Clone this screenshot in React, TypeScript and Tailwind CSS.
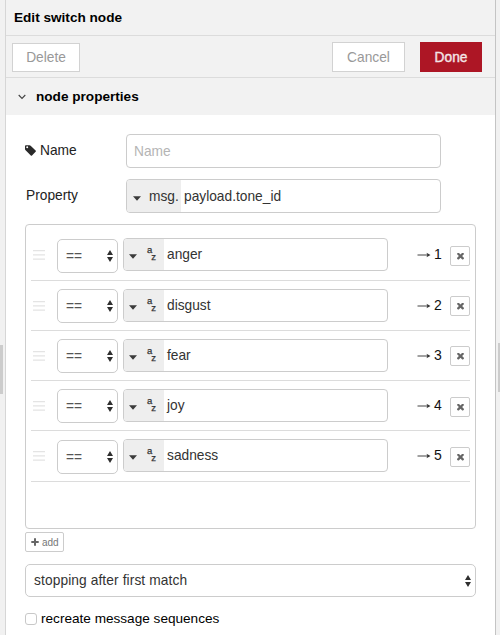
import React from "react";

type Rule = { value: string; row: string; select: string; remove: string };

const rules: Rule[] = [
  { value: "anger", row: "h-[51px]", select: "mt-[9px]", remove: "mt-4" },
  { value: "disgust", row: "h-[50px]", select: "mt-2", remove: "mt-[15px]" },
  { value: "fear", row: "h-[50px]", select: "mt-2", remove: "mt-[15px]" },
  { value: "joy", row: "h-[50px]", select: "mt-2", remove: "mt-4" },
  { value: "sadness", row: "h-[51px]", select: "mt-[9px]", remove: "mt-4" },
];

function Tag() {
  return (
    <svg className="mt-[4px] size-[11px]" viewBox="0 0 11 11">
      <path
        fillRule="evenodd"
        d="M0 1.2Q0 .3.9.3h3.6q.8 0 1.4.6l4.7 4.7q.6.6 0 1.2L7 10.4q-.6.6-1.2 0L.6 5.2Q0 4.6 0 3.9zM2.2 1.3a1 1 0 1 0 0 2 1 1 0 0 0 0-2z"
        fill="#2a2a2a"
      />
    </svg>
  );
}

function Caret() {
  return (
    <svg className="mt-[4px] h-[5px] w-2 shrink-0" viewBox="0 0 8 5">
      <path d="M0 .3h8L4 4.7z" fill="#3a3a3a" />
    </svg>
  );
}

function UpDown() {
  return (
    <svg className="h-3 w-[6px] shrink-0" viewBox="0 0 6 12">
      <path d="M3 0l3 5H0zM0 7h6l-3 5z" fill="#2f2f2f" />
    </svg>
  );
}

function Times() {
  return (
    <svg className="size-[7px]" viewBox="302 434 1188 1188" fill="#666">
      <path d="M1490 1322q0 40-28 68l-136 136q-28 28-68 28t-68-28l-294-294-294 294q-28 28-68 28t-68-28l-136-136q-28-28-28-68t28-68l294-294-294-294q-28-28-28-68t28-68l136-136q28-28 68-28t68 28l294 294 294-294q28-28 68-28t68 28l136 136q28 28 28 68t-28 68l-294 294 294 294q28 28 28 68z" />
    </svg>
  );
}

function RuleRow({ rule, index }: { rule: Rule; index: number }) {
  return (
    <div className={`flex items-start border-b border-[#dcdcdc] ${rule.row}`}>
      <svg className="ml-[2px] mt-5 h-[10px] w-3" viewBox="0 0 12 10">
        <path d="M0 .6h12M0 4.9h12M0 9.2h12" stroke="#e4e4e4" strokeWidth="1.2" />
      </svg>
      <div className={`ml-3 flex h-[34px] w-[61px] items-center justify-between rounded-[5px] border border-[#ccc] pl-2 pr-[4px] ${rule.select}`}>
        <span className="pt-[2px] text-[#555]">==</span>
        <UpDown />
      </div>
      <div className="ml-[5px] mt-2 flex h-[33px] w-[265px] overflow-hidden rounded-[4px] border border-[#ccc]">
        <div className="flex w-10 items-center bg-[#eee] pl-[5px]">
          <Caret />
          <div className="ml-[10px] flex text-[9.5px] leading-[10px] text-[#333] [-webkit-text-stroke:0.25px]">
            <span className="-mt-[3px] mb-[3px]">a</span>
            <span className="-ml-px mt-[4px]">z</span>
          </div>
        </div>
        <span className="pl-[3px] leading-[32px] text-[#333]">{rule.value}</span>
      </div>
      <div className="ml-auto mt-[14px] flex h-5 items-center text-[14px] text-[#111]">
        <svg className="mr-[3px] mt-[2px] h-[6px] w-[14px]" viewBox="0 0 14 6">
          <path d="M.5 3h11" stroke="#444" strokeWidth="1" />
          <path d="M9.5.7L13.5 3l-4 2.3L10.4 3z" fill="#333" />
        </svg>
        <span className="w-2">{index + 1}</span>
      </div>
      <button className={`ml-2 flex size-5 items-center justify-center rounded-[2px] border border-[#ccc] ${rule.remove}`}>
        <Times />
      </button>
    </div>
  );
}

export default function App() {
  return (
    <div className="flex h-[635px] w-[500px] overflow-hidden bg-[#f1f1f1] font-['Liberation_Sans',Arial,sans-serif] text-[13.75px] leading-5 text-[#222]">
      <div className="w-[5px] pt-[345px]">
        <div className="h-[49px] w-[3px] bg-[#ccc]" />
      </div>
      <main className="flex w-[491px] flex-col border-x border-l-[#d6d6d6] border-r-[#c4c4c4] bg-white">
        <header className="h-9 border-b border-[#dcdcdc] bg-[#f2f2f2] pl-2 pt-2 text-[13.6px] font-bold text-black">
          Edit switch node
        </header>
        <div className="flex h-[42px] items-start border-b border-[#dcdcdc] bg-[#f2f2f2] pl-[6px] pr-[13px] pt-[6px] text-[#999]">
          <button className="mt-px h-[29px] w-[68px] border border-[#d2d2d2] bg-white pt-px">Delete</button>
          <button className="ml-auto h-[30px] w-[73px] border border-[#d2d2d2] bg-white pt-px">Cancel</button>
          <button className="ml-[15px] h-[30px] w-[62px] bg-[#ad1625] pt-px text-[#f3e4e6] [-webkit-text-stroke:0.4px]">Done</button>
        </div>
        <h2 className="flex h-[37px] shrink-0 items-center bg-[#f2f2f2] pl-3 text-[13.6px] font-bold text-black">
          <svg className="mr-[10px] size-2" viewBox="0 0 8 8">
            <path d="M.7 2L4 5.5 7.3 2" fill="none" stroke="#444" strokeWidth="1.1" />
          </svg>
          <span className="pt-px">node properties</span>
        </h2>
        <section className="flex flex-col px-[19px] pt-[19px]">
          <div className="flex h-[34px]">
            <label className="flex w-[101px] items-start gap-1 pt-[7px]">
              <Tag />
              <span>Name</span>
            </label>
            <div className="w-[315px] rounded-[4px] border border-[#ccc] pl-[7px] leading-[33px] text-[#b5b5b5]">Name</div>
          </div>
          <div className="mt-[11px] flex h-[34px]">
            <label className="w-[101px] pl-px pt-[7px]">Property</label>
            <div className="flex w-[315px] overflow-hidden rounded-[4px] border border-[#ccc] text-[#333]">
              <div className="flex w-[54px] items-center bg-[#eee] pl-[6px]">
                <Caret />
                <span className="ml-2 pt-px">msg.</span>
              </div>
              <span className="pl-[3px] leading-[34px]">payload.tone_id</span>
            </div>
          </div>
          <div className="mt-[11px] h-[305px] w-[451px] rounded-[4px] border border-[#ccc] px-[5px] pt-[5px]">
            {rules.map((rule, i) => (
              <RuleRow key={rule.value} rule={rule} index={i} />
            ))}
          </div>
          <button className="mt-[3px] flex h-5 w-[39px] items-center rounded-[2px] border border-[#ccc] pl-[5px] text-[10px] text-[#777]">
            <svg className="mr-[3px] size-2" viewBox="0 0 8 8">
              <path d="M4 .3v7.4M.3 4h7.4" stroke="#666" strokeWidth="2" />
            </svg>
            <span className="pt-[2px]">add</span>
          </button>
          <div className="mt-3 flex h-[33px] w-[451px] items-center justify-between rounded-[5px] border border-[#ccc] pl-2 pr-[4px] tracking-[0.1px] text-[#333]">
            <span className="pt-px">stopping after first match</span>
            <UpDown />
          </div>
          <label className="mt-[11px] flex items-center text-[13.6px] text-black">
            <span className="mr-1 size-3 rounded-[3px] border border-[#c8c8c8]" />
            <span className="pt-px">recreate message sequences</span>
          </label>
        </section>
      </main>
      <div className="flex w-1 justify-end pt-[343px]">
        <div className="h-[49px] w-[2px] bg-[#ccc]" />
      </div>
    </div>
  );
}
